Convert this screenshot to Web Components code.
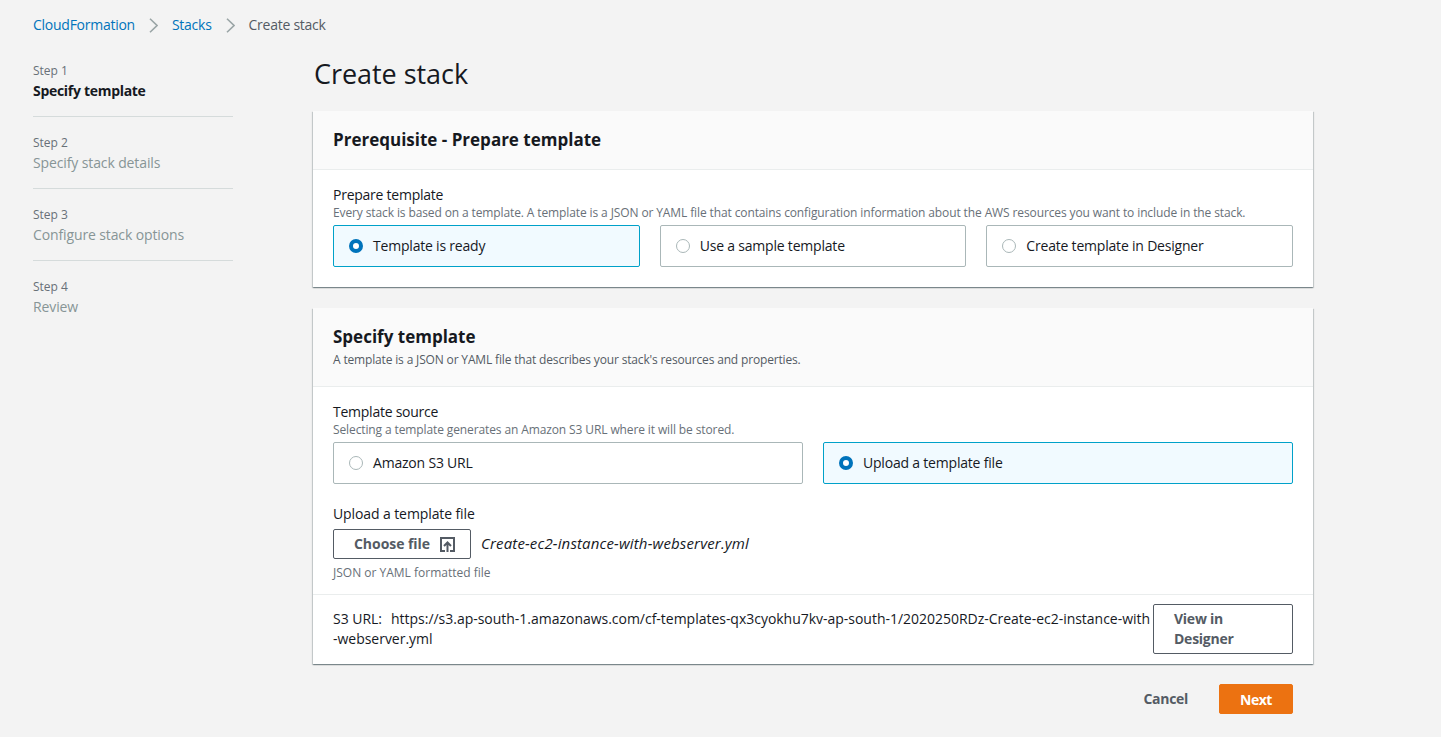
<!DOCTYPE html>
<html lang="en">
<head>
<meta charset="utf-8">
<title>Create stack</title>
<style>
    html, body { margin: 0; padding: 0; height: 100%; }
    body {
        background: #f3f3f3;
        color: #16191f;
        font-family: "Open Sans", "Noto Sans", "Liberation Sans", sans-serif;
        font-size: 14px;
        line-height: 20px;
        letter-spacing: -0.2px;
        overflow: hidden;
    }
</style>
</head>
<body>
<stack-page>
    <bread-crumbs slot="crumbs"></bread-crumbs>
    <wizard-steps slot="nav">
        <wizard-step num="1" title="Specify template" active></wizard-step>
        <wizard-step num="2" title="Specify stack details"></wizard-step>
        <wizard-step num="3" title="Configure stack options"></wizard-step>
        <wizard-step num="4" title="Review" last></wizard-step>
    </wizard-steps>

    <stack-card heading="Prerequisite - Prepare template">
        <form-field label="Prepare template" desc="Every stack is based on a template. A template is a JSON or YAML file that contains configuration information about the AWS resources you want to include in the stack.">
            <radio-group cols="3">
                <radio-tile checked>Template is ready</radio-tile>
                <radio-tile>Use a sample template</radio-tile>
                <radio-tile>Create template in Designer</radio-tile>
            </radio-group>
        </form-field>
    </stack-card>

    <stack-card heading="Specify template" sub="A template is a JSON or YAML file that describes your stack's resources and properties." tall>
        <form-field label="Template source" desc="Selecting a template generates an Amazon S3 URL where it will be stored.">
            <radio-group cols="2">
                <radio-tile>Amazon S3 URL</radio-tile>
                <radio-tile checked>Upload a template file</radio-tile>
            </radio-group>
        </form-field>
        <file-upload></file-upload>
        <s3-url slot="footer"></s3-url>
    </stack-card>

    <wizard-actions></wizard-actions>
</stack-page>

<script>
// page frame: breadcrumb on top, steps on the left, cards on the right
class stackPage extends HTMLElement {
    constructor() {
        super();
        this.attachShadow({ mode: 'open' });
        this.shadowRoot.innerHTML = `
            <style>
                :host { display: block; padding: 15px 0 0 33px; }
                .cols { display: flex; margin-top: 20px; }
                nav { width: 200px; flex: none; padding-top: 6px; }
                main { width: 1000px; margin-left: 80px; display: flex; flex-direction: column; gap: 20px; }
                h1 {
                    margin: -1px 0 -3px 1px;
                    font-size: 27px;
                    line-height: 40px;
                    font-weight: 400;
                    letter-spacing: -0.05px;
                    color: #16191f;
                }
            </style>
            <slot name="crumbs"></slot>
            <div class="cols">
                <nav><slot name="nav"></slot></nav>
                <main><h1>Create stack</h1><slot></slot></main>
            </div>
        `;
    }
}
customElements.define('stack-page', stackPage);

class breadCrumbs extends HTMLElement {
    constructor() {
        super();
        this.attachShadow({ mode: 'open' });
        const chevron = `<svg width="9" height="15" viewBox="0 0 9 15"><path d="M1 .7l7 6.8-7 6.8" fill="none" stroke="#9aa5a6" stroke-width="1.6"/></svg>`;
        this.shadowRoot.innerHTML = `
            <style>
                :host { display: flex; align-items: center; height: 20px; letter-spacing: -0.26px; }
                a { color: #0073bb; text-decoration: none; }
                span { color: #545b64; }
                svg { margin: 0 14px; display: block; }
            </style>
            <a href="#">CloudFormation</a>${chevron}<a href="#">Stacks</a>${chevron}<span>Create stack</span>
        `;
    }
}
customElements.define('bread-crumbs', breadCrumbs);

class wizardSteps extends HTMLElement {
    constructor() {
        super();
        this.attachShadow({ mode: 'open' });
        this.shadowRoot.innerHTML = `
            <style>:host { display: block; }</style>
            <slot></slot>
        `;
    }
}
customElements.define('wizard-steps', wizardSteps);

class wizardStep extends HTMLElement {
    constructor() {
        super();
        this.attachShadow({ mode: 'open' });
        const active = this.hasAttribute('active');
        const last = this.hasAttribute('last');
        this.shadowRoot.innerHTML = `
            <style>
                :host { display: block; }
                .box { height: 55px; margin-bottom: 16px; border-bottom: 1px solid ${last ? 'transparent' : '#d5dbdb'}; }
                small { display: block; font-size: 12px; line-height: 20px; letter-spacing: 0; color: #687078; }
                .t { color: ${active ? '#16191f' : '#879596'}; font-weight: ${active ? 700 : 400}; letter-spacing: ${active ? '-0.3px' : '-0.12px'}; }
            </style>
            <div class="box">
                <small>Step ${this.getAttribute('num')}</small>
                <div class="t">${this.getAttribute('title')}</div>
            </div>
        `;
    }
}
customElements.define('wizard-step', wizardStep);

class stackCard extends HTMLElement {
    constructor() {
        super();
        this.attachShadow({ mode: 'open' });
        const sub = this.getAttribute('sub');
        this.shadowRoot.innerHTML = `
            <style>
                :host {
                    display: block;
                    background: #fff;
                    box-shadow: 0 1px 1px 0 rgba(0,28,36,.3), 1px 1px 1px 0 rgba(0,28,36,.15), -1px 1px 1px 0 rgba(0,28,36,.15);
                }
                :host([tall]) { margin-top: 1px; }
                header {
                    background: #fafafa;
                    border-bottom: 1px solid #eaeded;
                    padding: 19px 20px ${sub ? '17px' : '19px'};
                }
                h2 { margin: 0; font-size: 17px; line-height: 20px; font-weight: 700; letter-spacing: 0; color: #16191f; }
                p { margin: 4px 0 0; font-size: 12px; line-height: 18px; letter-spacing: -0.16px; color: #545b64; }
                .body { padding: 15px 20px 20px; }
                ::slotted([slot=footer]) { border-top: 1px solid #eaeded; }
            </style>
            <header><h2>${this.getAttribute('heading')}</h2>${sub ? `<p>${sub}</p>` : ''}</header>
            <div class="body"><slot></slot></div>
            <slot name="footer"></slot>
        `;
    }
}
customElements.define('stack-card', stackCard);

class formField extends HTMLElement {
    constructor() {
        super();
        this.attachShadow({ mode: 'open' });
        this.shadowRoot.innerHTML = `
            <style>
                :host { display: block; }
                label { display: block; color: #16191f; line-height: 20px; letter-spacing: -0.25px; }
                p { margin: 1px 0 0; font-size: 12px; line-height: 14px; letter-spacing: -0.115px; color: #687078; padding-bottom: 5px; }
            </style>
            <label>${this.getAttribute('label')}</label>
            <p>${this.getAttribute('desc')}</p>
            <slot></slot>
        `;
    }
}
customElements.define('form-field', formField);

class radioGroup extends HTMLElement {
    constructor() {
        super();
        this.attachShadow({ mode: 'open' });
        const cols = this.getAttribute('cols');
        this.shadowRoot.innerHTML = `
            <style>
                :host { display: grid; grid-template-columns: repeat(${cols}, 1fr); gap: 20px; }
            </style>
            <slot></slot>
        `;
    }
}
customElements.define('radio-group', radioGroup);

class radioTile extends HTMLElement {
    constructor() {
        super();
        this.attachShadow({ mode: 'open' });
        this.shadowRoot.innerHTML = `
            <style>
                :host {
                    display: flex;
                    align-items: center;
                    box-sizing: border-box;
                    height: 42px;
                    padding: 0 15px;
                    border: 1px solid #aab7b8;
                    border-radius: 2px;
                    background: #fff;
                    color: #16191f;
                }
                :host([checked]) { border-color: #00a1c9; background: #f1faff; }
                .dot {
                    box-sizing: border-box;
                    width: 14px;
                    height: 14px;
                    margin-right: 10px;
                    flex: none;
                    border-radius: 50%;
                    border: 1px solid #aab7b8;
                    background: #fff;
                }
                :host([checked]) .dot { border: 4px solid #0073bb; }
            </style>
            <span class="dot"></span><slot></slot>
        `;
    }
}
customElements.define('radio-tile', radioTile);

class fileUpload extends HTMLElement {
    constructor() {
        super();
        this.attachShadow({ mode: 'open' });
        this.shadowRoot.innerHTML = `
            <style>
                :host { display: block; margin-top: 20px; margin-bottom: -9px; }
                label { display: block; color: #16191f; line-height: 20px; letter-spacing: -0.1px; }
                .row { display: flex; align-items: center; margin-top: 5px; }
                button {
                    box-sizing: border-box;
                    width: 138px;
                    height: 30px;
                    display: flex;
                    align-items: center;
                    background: #fff;
                    border: 1px solid #545b64;
                    border-radius: 2px;
                    color: #545b64;
                    font-family: inherit;
                    font-size: 14px;
                    line-height: 20px;
                    font-weight: 700;
                    letter-spacing: -0.05px;
                    padding: 0 0 0 20px;
                }
                svg { margin-left: 10px; display: block; flex: none; }
                em { margin: -2px 0 0 10px; font-size: 15px; letter-spacing: 0.15px; color: #16191f; }
                p { margin: 4px 0 0; font-size: 12px; line-height: 20px; letter-spacing: 0; color: #687078; }
            </style>
            <label>Upload a template file</label>
            <div class="row">
                <button>Choose file
                    <svg width="15" height="15" viewBox="0 0 15 15" fill="none" stroke="#545b64" stroke-width="2">
                        <path d="M5 14H1V1h13v13h-4"/>
                        <path d="M7.5 15V6M4 9l3.5-3.5L11 9"/>
                    </svg>
                </button>
                <em>Create-ec2-instance-with-webserver.yml</em>
            </div>
            <p>JSON or YAML formatted file</p>
        `;
    }
}
customElements.define('file-upload', fileUpload);

class s3Url extends HTMLElement {
    constructor() {
        super();
        this.attachShadow({ mode: 'open' });
        this.shadowRoot.innerHTML = `
            <style>
                :host { display: flex; padding: 9px 20px 10px; color: #16191f; letter-spacing: -0.02px; }
                .url { flex: 1; min-width: 0; padding-top: 5px; white-space: nowrap; }
                .url span { margin-right: 9px; }
                button {
                    box-sizing: border-box;
                    flex: none;
                    width: 140px;
                    height: 50px;
                    margin-left: 2px;
                    padding: 4px 20px;
                    text-align: left;
                    background: #fff;
                    border: 1px solid #545b64;
                    border-radius: 2px;
                    color: #545b64;
                    font-family: inherit;
                    font-size: 14px;
                    line-height: 20px;
                    font-weight: 700;
                    letter-spacing: -0.25px;
                }
            </style>
            <div class="url"><span>S3 URL:</span>https://s3.ap-south-1.amazonaws.com/cf-templates-qx3cyokhu7kv-ap-south-1/2020250RDz-Create-ec2-instance-with<br>-webserver.yml</div>
            <button>View in Designer</button>
        `;
    }
}
customElements.define('s3-url', s3Url);

class wizardActions extends HTMLElement {
    constructor() {
        super();
        this.attachShadow({ mode: 'open' });
        this.shadowRoot.innerHTML = `
            <style>
                :host { display: flex; justify-content: flex-end; align-items: center; padding-right: 20px; gap: 31px; }
                a { color: #545b64; font-weight: 700; letter-spacing: -0.3px; text-decoration: none; }
                button {
                    box-sizing: border-box;
                    width: 74px;
                    height: 30px;
                    background: #ec7211;
                    border: 1px solid #ec7211;
                    border-radius: 2px;
                    color: #fff;
                    font-family: inherit;
                    font-size: 14px;
                    font-weight: 700;
                    letter-spacing: -0.5px;
                }
            </style>
            <a href="#">Cancel</a><button>Next</button>
        `;
    }
}
customElements.define('wizard-actions', wizardActions);
</script>
</body>
</html>
